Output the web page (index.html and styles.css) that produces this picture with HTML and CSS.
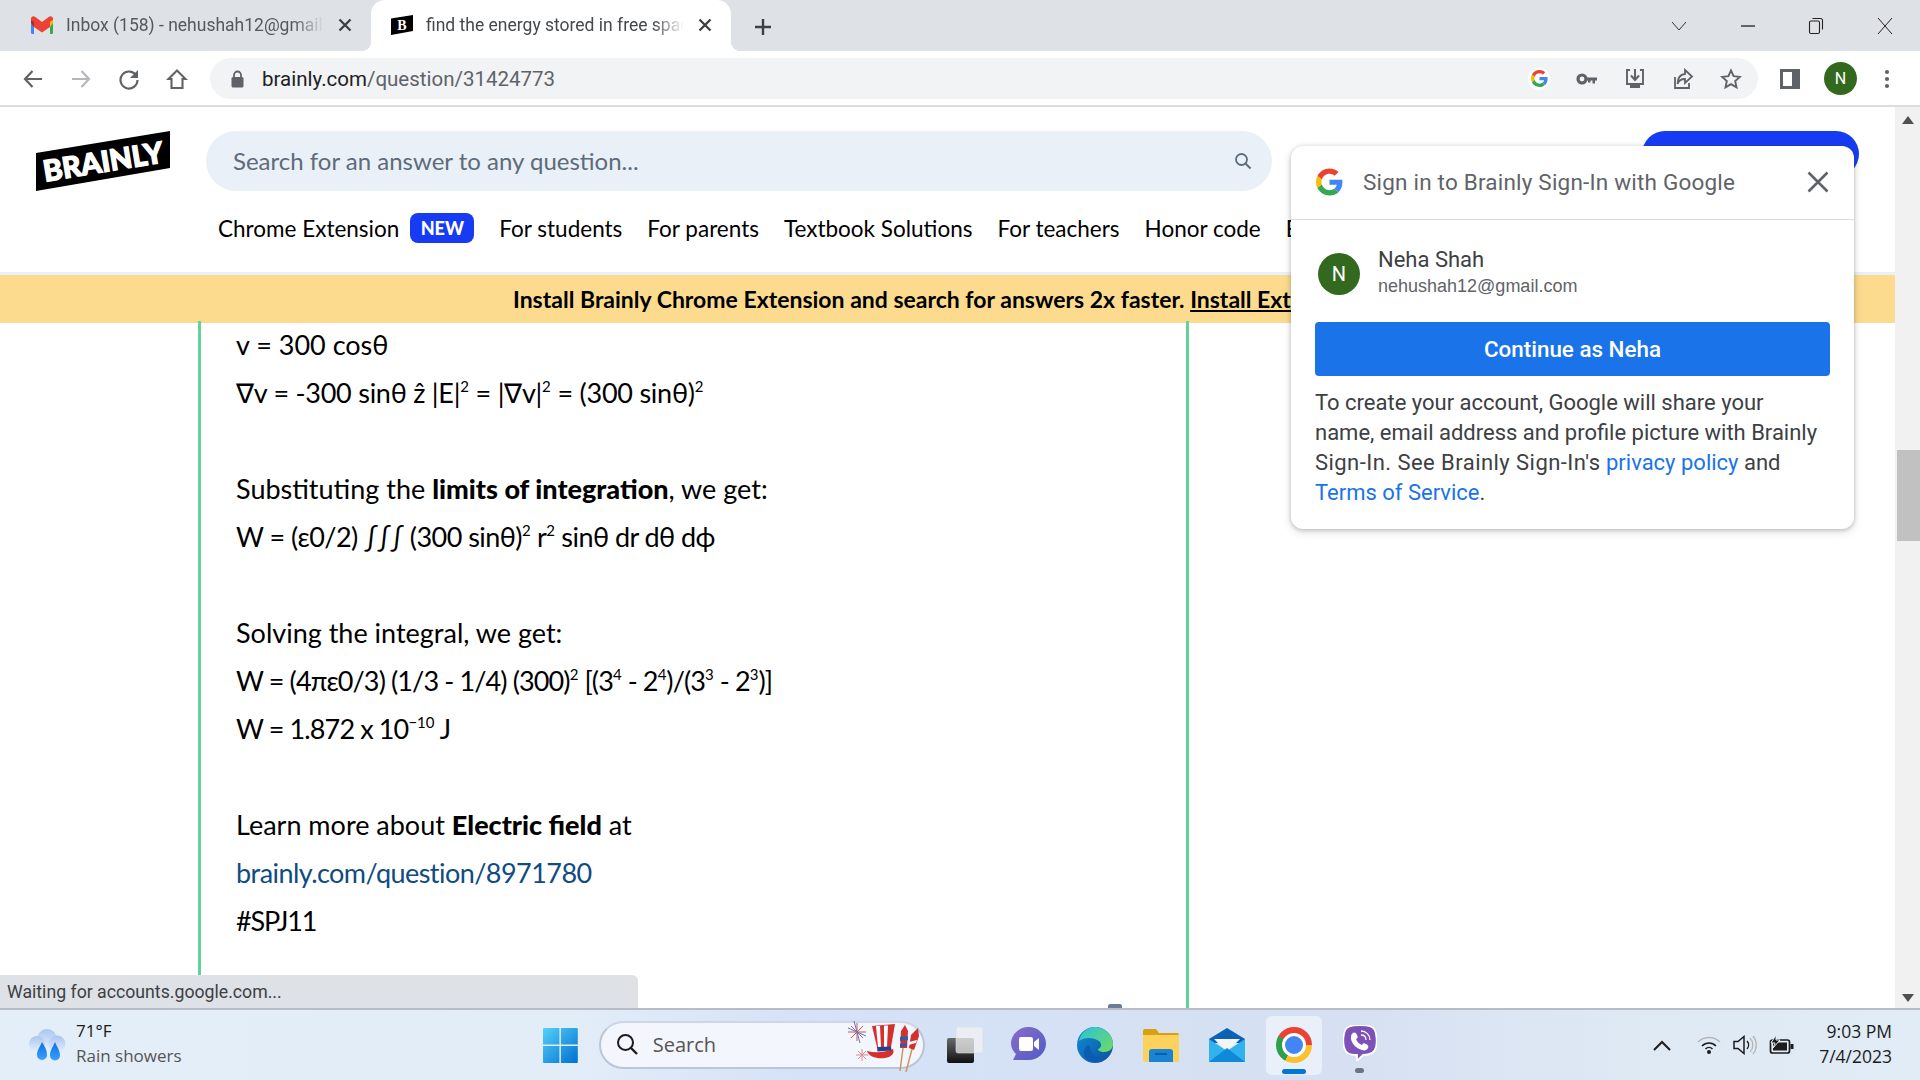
FILE: index.html
```html
<!DOCTYPE html>
<html lang="en">
<head>
<meta charset="utf-8">
<title>find the energy stored in free space</title>
<link rel="stylesheet" href="styles.css">
</head>
<body>
<svg class="defs" width="0" height="0" aria-hidden="true">
  <symbol id="g-logo" viewBox="0 0 48 48">
    <path fill="#EA4335" d="M24 9.5c3.54 0 6.71 1.22 9.21 3.6l6.85-6.85C35.9 2.38 30.47 0 24 0 14.62 0 6.51 5.38 2.56 13.22l7.98 6.19C12.43 13.72 17.74 9.5 24 9.5z"/>
    <path fill="#4285F4" d="M46.98 24.55c0-1.57-.15-3.09-.38-4.55H24v9.02h12.94c-.58 2.96-2.26 5.48-4.78 7.18l7.73 6c4.51-4.18 7.09-10.36 7.09-17.65z"/>
    <path fill="#FBBC05" d="M10.53 28.59c-.48-1.45-.76-2.99-.76-4.59s.27-3.14.76-4.59l-7.98-6.19C.92 16.46 0 20.12 0 24c0 3.88.92 7.54 2.56 10.78l7.97-6.19z"/>
    <path fill="#34A853" d="M24 48c6.48 0 11.93-2.13 15.89-5.81l-7.73-6c-2.15 1.45-4.92 2.3-8.16 2.3-6.26 0-11.57-4.22-13.47-9.91l-7.98 6.19C6.51 42.62 14.62 48 24 48z"/>
  </symbol>
  <symbol id="tab-close" viewBox="0 0 14 14">
    <path d="M1.500 1.500l11 11M12.500 1.500l-11 11" stroke="#3c4043" stroke-width="2.300"/>
  </symbol>
</svg>

<header class="tabstrip">
  <div class="tab">
    <svg class="favicon" width="22" height="18" viewBox="0 0 22 18">
      <path fill="#4285F4" d="M0 16.5V4l3 1v13H1.500A1.500 1.500 0 0 1 0 16.500z"/>
      <path fill="#34A853" d="M19 18V5l3-1v12.500a1.500 1.500 0 0 1-1.500 1.500z"/>
      <path fill="#EA4335" d="M3 11 0 4V2.500C0 .5 2.300-.6 4 .7l7 5.300L18 .7c1.700-1.300 4-.2 4 1.800V4l-3 7-8 5.500z"/>
      <path fill="#C5221F" d="M0 4l3 1.800V11L0 7z"/>
      <path fill="#FBBC05" d="M22 4l-3 1.800V11l3-4z"/>
    </svg>
    <span class="tab-title">Inbox (158) - nehushah12@gmail.com</span>
    <svg class="tab-x" width="14" height="14"><use href="#tab-close"/></svg>
  </div>
  <div class="tab tab-active">
    <svg class="favicon" width="22" height="20" viewBox="0 0 22 20">
      <path fill="#000" d="M0 3.500 22 0v16L0 20z"/>
      <text x="11" y="14.500" text-anchor="middle" class="fav-b">B</text>
    </svg>
    <span class="tab-title">find the energy stored in free space</span>
    <svg class="tab-x" width="14" height="14"><use href="#tab-close"/></svg>
  </div>
  <svg class="newtab" width="20" height="20" viewBox="0 0 20 20"><path d="M10 2v16M2 10h16" stroke="#3c4043" stroke-width="2.400"/></svg>
  <div class="winctl">
    <svg width="16" height="10" viewBox="0 0 16 10"><path d="M1 1l7 8 7-8" fill="none" stroke="#333" stroke-width="1"/></svg>
    <svg width="16" height="10" viewBox="0 0 16 10"><path d="M1 5h14" stroke="#111" stroke-width="1.200"/></svg>
    <svg width="16" height="18" viewBox="0 0 16 18"><rect x="1.500" y="4" width="10" height="12.500" rx="1.500" fill="none" stroke="#222" stroke-width="1.100"/><path d="M4.500 1.500h8a2 2 0 0 1 2 2v9" fill="none" stroke="#222" stroke-width="1.100"/></svg>
    <svg width="16" height="18" viewBox="0 0 16 18"><path d="M1 1l14 16M15 1 1 17" stroke="#222" stroke-width="1"/></svg>
  </div>
</header>

<nav class="toolbar">
  <svg class="tool" width="22" height="22" viewBox="0 0 22 22"><path d="M20 11H3M10.500 3 3 11l7.500 8" fill="none" stroke="#5f6368" stroke-width="2.200"/></svg>
  <svg class="tool" width="22" height="22" viewBox="0 0 22 22"><path d="M2 11h17M11.500 3 19 11l-7.500 8" fill="none" stroke="#b4b7bb" stroke-width="2.200"/></svg>
  <svg class="tool" width="22" height="22" viewBox="0 0 22 22"><path d="M18.500 8A8.500 8.500 0 1 0 19.500 12" fill="none" stroke="#5f6368" stroke-width="2.200"/><path d="M20 2v8h-8z" fill="#5f6368"/></svg>
  <svg class="tool" width="22" height="22" viewBox="0 0 22 22"><path d="M11 2.500 2.500 11H5.500v9h11v-9h3z" fill="none" stroke="#5f6368" stroke-width="2.100"/></svg>
  <div class="omnibox">
    <svg width="13" height="18" viewBox="0 0 13 18"><path d="M3 7V5a3.500 3.500 0 0 1 7 0v2" fill="none" stroke="#5f6368" stroke-width="1.800"/><rect x="0.500" y="7" width="12" height="10.500" rx="1.500" fill="#5f6368"/></svg>
    <span class="url"><span class="url-host">brainly.com</span>/question/31424773</span>
    <div class="omni-icons">
      <span class="g-bubble"><svg width="17" height="17"><use href="#g-logo"/></svg></span>
      <svg width="22" height="12" viewBox="0 0 22 12"><circle cx="6" cy="6" r="4" fill="none" stroke="#5f6368" stroke-width="3.200"/><path d="M9 4.500h12v3h-2v3h-2.500v-3h-2v2H12v-2H9z" fill="#5f6368"/></svg>
      <svg width="22" height="22" viewBox="0 0 22 22"><path d="M6 2H3v14h16V2h-3" fill="none" stroke="#5f6368" stroke-width="1.900"/><path d="M11 1v10M7 7.500l4 4.500 4-4.500" fill="none" stroke="#5f6368" stroke-width="2"/><path d="M6 16h10v4H6z" fill="#5f6368"/></svg>
      <svg width="22" height="22" viewBox="0 0 22 22"><path d="M3 9v11h14v-5" fill="none" stroke="#5f6368" stroke-width="1.800"/><path d="M13 2l7 6.500-7 6.500v-4C9 11 6.500 13 5.500 16c0-6 3-9.500 7.500-10z" fill="none" stroke="#5f6368" stroke-width="1.800"/></svg>
      <svg width="22" height="22" viewBox="0 0 22 22"><path d="M11 2.500l2.600 5.700 6.200.7-4.600 4.200 1.300 6.200L11 16.200l-5.500 3.100 1.300-6.200L2.200 8.900l6.200-.7z" fill="none" stroke="#5f6368" stroke-width="1.900"/></svg>
    </div>
  </div>
  <svg class="sidepanel" width="20" height="20" viewBox="0 0 20 20"><path d="M0 0h20v20H0z" fill="#5f6368"/><path d="M3 3h9v14H3z" fill="#fff"/></svg>
  <span class="chrome-avatar">N</span>
  <svg class="kebab" width="6" height="20" viewBox="0 0 6 20"><circle cx="3" cy="3" r="2.100" fill="#5f6368"/><circle cx="3" cy="10" r="2.100" fill="#5f6368"/><circle cx="3" cy="17" r="2.100" fill="#5f6368"/></svg>
</nav>

<div class="viewport">
  <main class="page">
    <div class="site-header">
      <svg class="logo" width="134" height="60" viewBox="0 0 134 60">
        <path d="M0 22 134 0v37L0 60z" fill="#000"/>
        <text class="logo-text" x="67" y="41" text-anchor="middle" transform="rotate(-9.300 67 30)">BRAINLY</text>
      </svg>
      <div class="search">
        <span>Search for an answer to any question...</span>
        <svg width="18" height="18" viewBox="0 0 18 18"><circle cx="7.500" cy="7.500" r="5.500" fill="none" stroke="#5d6b7a" stroke-width="1.800"/><path d="M11.500 11.500 16.500 16.500" stroke="#5d6b7a" stroke-width="2"/></svg>
      </div>
      <div class="signup-btn"></div>
      <div class="site-nav">
        <span>Chrome Extension</span><span class="badge-new">NEW</span><span>For students</span><span>For parents</span><span>Textbook Solutions</span><span>For teachers</span><span>Honor code</span><span>Expert</span>
      </div>
    </div>
    <div class="banner"><strong>Install Brainly Chrome Extension and search for answers 2x faster. <u>Install Extension</u></strong></div>
    <div class="content">
      <article class="answer">
        <p>v = 300 cosθ</p>
        <p class="tight-s">∇v = -300 sinθ ẑ |E|<sup>2</sup> = |∇v|<sup>2</sup> = (300 sinθ)<sup>2</sup></p>
        <p>&nbsp;</p>
        <p>Substituting the <b>limits of integration</b>, we get:</p>
        <p class="tight-m">W = (ε0/2) ∫∫∫ (300 sinθ)<sup>2</sup> r<sup>2</sup> sinθ dr dθ dϕ</p>
        <p>&nbsp;</p>
        <p>Solving the integral, we get:</p>
        <p class="tight-l">W = (4πε0/3) (1/3 - 1/4) (300)<sup>2</sup> [(3<sup>4</sup> - 2<sup>4</sup>)/(3<sup>3</sup> - 2<sup>3</sup>)]</p>
        <p class="tight-l">W = 1.872 x 10<sup>−10</sup> J</p>
        <p>&nbsp;</p>
        <p>Learn more about <b>Electric field</b> at</p>
        <p class="tight-m"><a class="answer-link">brainly.com/question/8971780</a></p>
        <p class="tight-x">#SPJ11</p>
      </article>
    </div>
    <div class="peek"></div>

    <section class="gsi">
      <div class="gsi-head">
        <svg width="27" height="28"><use href="#g-logo"/></svg>
        <span class="gsi-title">Sign in to Brainly Sign-In with Google</span>
        <svg class="gsi-close" width="22" height="22" viewBox="0 0 22 22"><path d="M1.500 1.500l19 19M20.500 1.500l-19 19" stroke="#5f6368" stroke-width="2.600"/></svg>
      </div>
      <div class="gsi-body">
        <div class="gsi-user">
          <span class="gsi-avatar">N</span>
          <div>
            <div class="gsi-name">Neha Shah</div>
            <div class="gsi-mail">nehushah12@gmail.com</div>
          </div>
        </div>
        <div class="gsi-btn">Continue as Neha</div>
        <p class="gsi-text">To create your account, Google will share your<br>name, email address and profile picture with Brainly<br><span class="gsi-wide">Sign-In. See Brainly Sign-In's</span> <a>privacy policy</a> and<br><a>Terms of Service</a>.</p>
      </div>
    </section>

    <div class="status">Waiting for accounts.google.com...</div>
  </main>
  <aside class="scrollbar">
    <svg width="12" height="8" viewBox="0 0 12 8"><path d="M6 0l6 8H0z" fill="#505050"/></svg>
    <div class="thumb"></div>
    <svg class="down" width="12" height="8" viewBox="0 0 12 8"><path d="M6 8l6-8H0z" fill="#505050"/></svg>
  </aside>
</div>

<footer class="taskbar">
  <div class="weather">
    <svg width="37" height="32" viewBox="0 0 37 32">
      <defs><linearGradient id="cl" x1="0" y1="0" x2="0" y2="1"><stop offset="0" stop-color="#a9c6f0"/><stop offset="1" stop-color="#e6eefc"/></linearGradient>
      <linearGradient id="dr" x1="0" y1="0" x2="0" y2="1"><stop offset="0" stop-color="#0f6fe0"/><stop offset="1" stop-color="#3aa0ff"/></linearGradient></defs>
      <circle cx="18" cy="10" r="10" fill="url(#cl)"/><circle cx="8" cy="15" r="8" fill="url(#cl)"/><circle cx="28" cy="15" r="8.500" fill="url(#cl)"/>
      <path d="M13 13c3 5 5 8 5 13a5 5 0 0 1-10 0c0-5 3-8 5-13z" fill="url(#dr)"/>
      <path d="M26 13c2 5 5 8 5 13.500a5 5 0 0 1-10 0c0-5.500 3-8.500 5-13.500z" fill="url(#dr)"/>
    </svg>
    <div class="weather-text"><div class="temp">71°F</div><div class="cond">Rain showers</div></div>
  </div>
  <div class="apps">
    <svg class="winlogo" width="35" height="35" viewBox="0 0 35 35">
      <defs><linearGradient id="wl" x1="0" y1="0" x2="1" y2="1"><stop offset="0" stop-color="#55d0fa"/><stop offset="1" stop-color="#0070d0"/></linearGradient></defs>
      <path d="M1 0h15.500v16.500H0V1a1 1 0 0 1 1-1zM18 0h16a1 1 0 0 1 1 1v15.500H18zM0 18h16.500v17H1a1 1 0 0 1-1-1zM18 18h17v16a1 1 0 0 1-1 1H18z" fill="url(#wl)"/>
    </svg>
    <div class="tb-search">
      <svg width="22" height="22" viewBox="0 0 22 22"><circle cx="9.500" cy="9.500" r="7.500" fill="none" stroke="#1c1c1c" stroke-width="2"/><path d="M15 15l6 6" stroke="#1c1c1c" stroke-width="2.400"/></svg>
      <span>Search</span>
      <svg class="hat" width="72" height="54" viewBox="0 0 72 54">
        <g stroke="#d9534f" stroke-width="1"><path d="M10 4v18M1 13h18M4 7l12 12M16 7 4 19"/></g>
        <g stroke="#4a7fd0" stroke-width="1"><path d="M7 2l6 22M1 9l18 8"/></g>
        <g stroke="#d98f8f" stroke-width="1"><path d="M15 30v12M9 36h12M11 32l8 8M19 32l-8 8"/></g>
        <path d="M25 7 48 5l-4 23H30z" fill="#d5302e"/>
        <path d="M29 7h4l1 21h-3zM37 6.500h4l-1 21.500h-3z" fill="#fff"/>
        <path d="M20 32c8 2 16 2 26-2 2 5-2 8-8 9-8 1-16-1-18-7z" fill="#d5302e"/>
        <path d="M30 28l14-.500.500 4-14 1z" fill="#24408e"/>
        <path d="M54 12l4-6 3 6-1 17h-7z" fill="#d5302e"/><path d="M53 18l8-1v4l-8 1zM53 25l7-1v3l-7 1z" fill="#2a5fb0"/>
        <path d="M56 29l-3 23M65 30l-6 23" stroke="#c89a5a" stroke-width="1.500"/>
        <path d="M64 16l7-7 1 8-5 14-5-2z" fill="#d5302e"/><path d="M62 23l8-2-1 3-8 2z" fill="#fff"/>
      </svg>
    </div>
    <div class="slot">
      <svg width="37" height="36" viewBox="0 0 37 36">
        <defs><linearGradient id="tv" x1="0" y1="0" x2="0" y2="1"><stop offset="0" stop-color="#6a6a6a"/><stop offset="1" stop-color="#101010"/></linearGradient></defs>
        <rect x="0" y="11" width="27" height="25" rx="2" fill="url(#tv)"/>
        <rect x="9" y="0" width="27" height="26" rx="2" fill="#f3f3f3" fill-opacity=".72" stroke="#dcdcdc" stroke-width=".6"/>
      </svg>
    </div>
    <div class="slot">
      <svg width="35" height="36" viewBox="0 0 35 36">
        <defs><linearGradient id="mt" x1="0" y1="0" x2="1" y2="1"><stop offset="0" stop-color="#8a6cc8"/><stop offset="1" stop-color="#4f5cc8"/></linearGradient></defs>
        <path d="M17.500 0C27 0 35 7.500 35 16.500S27 33 17.500 33H2L5 27C2 24 0 20.500 0 16.500 0 7.500 8 0 17.500 0z" fill="url(#mt)"/>
        <rect x="8" y="10" width="14" height="14" rx="2" fill="#fff"/><path d="M23 15l5-4v12l-5-4z" fill="#fff"/>
      </svg>
    </div>
    <div class="slot">
      <svg width="36" height="36" viewBox="0 0 36 36">
        <defs><linearGradient id="e1" x1="0" y1="0" x2="1" y2="1"><stop offset="0" stop-color="#2cc1d8"/><stop offset="1" stop-color="#6fdc60"/></linearGradient>
        <linearGradient id="e2" x1="0" y1="0" x2="1" y2="1"><stop offset="0" stop-color="#0f8ed8"/><stop offset="1" stop-color="#0c4f9e"/></linearGradient></defs>
        <circle cx="18" cy="18" r="18" fill="url(#e2)"/>
        <path d="M2 14C4 5 11 0 18 0c10 0 18 8 18 17 0 5-4 8-9 8-3 0-6-1-6-3 4-1 4-6 1-8-6-4-15-4-20 0z" fill="url(#e1)"/>
        <path d="M13 20c0 6 6 11 13 10-4 4-9 6-13 4C7 32 5 25 9 20c1-2 4-2 4 0z" fill="#0a5db0"/>
      </svg>
    </div>
    <div class="slot">
      <svg width="36" height="33" viewBox="0 0 36 33">
        <path d="M0 2a2 2 0 0 1 2-2h11l3 4h18a2 2 0 0 1 2 2v6H0z" fill="#d9a013"/>
        <path d="M0 6h36v25a2 2 0 0 1-2 2H2a2 2 0 0 1-2-2z" fill="#fcd25a"/>
        <path d="M6 33V23a3 3 0 0 1 3-3h18a3 3 0 0 1 3 3v10z" fill="#1a84d4"/>
        <path d="M12 25h12" stroke="#0c5da8" stroke-width="2"/>
      </svg>
    </div>
    <div class="slot">
      <svg width="36" height="34" viewBox="0 0 36 34">
        <path d="M0 11 18 0l18 11v4H0z" fill="#0a62b5"/>
        <path d="M5 11h26l-13 13z" fill="#f3f5f7"/>
        <path d="M0 11l18 12 18-12v23H0z" fill="#2fb2ee"/>
        <path d="M0 34l18-14 18 14z" fill="#0f8ad8"/>
      </svg>
    </div>
    <div class="slot slot-active">
      <span class="chrome-icon"><span></span></span>
      <i class="active-bar"></i>
    </div>
    <div class="slot slot-viber">
      <svg width="34" height="36" viewBox="0 0 34 36">
        <path d="M17 0c8 0 15 1 16 9 1 5 1 9 0 13-1 6-7 8-13 8l-6 6v-6C6 30 2 28 1 22 0 17 0 13 1 9 2 1 9 0 17 0z" fill="#7d51b8" stroke="#fff" stroke-width="1.800"/>
        <path d="M10 8c2-1 3 0 4 2s1 3-1 4c1 3 3 5 6 6 1-2 2-2 4-1s3 2 2 4-3 3-6 2C13 23 9 19 8 14c0-3 0-5 2-6z" fill="#fff"/>
        <path d="M18 6c5 0 9 4 9 9M18 10c3 0 5 2 5 5" fill="none" stroke="#fff" stroke-width="1.300"/>
      </svg>
      <i class="run-dot"></i>
    </div>
  </div>
  <div class="tray">
    <svg class="tray-chev" width="18" height="11" viewBox="0 0 18 11"><path d="M1 10l8-8 8 8" fill="none" stroke="#1c1c1c" stroke-width="2"/></svg>
    <svg class="tray-wifi" width="24" height="18" viewBox="0 0 24 18"><path d="M1 6c6-6 16-6 22 0" fill="none" stroke="#b5b5b5" stroke-width="1.500"/><path d="M5 10c4-4 10-4 14 0M8.500 13c2-2 5-2 7 0" fill="none" stroke="#1c1c1c" stroke-width="1.600"/><circle cx="12" cy="16" r="2" fill="#1c1c1c"/></svg>
    <svg class="tray-vol" width="24" height="20" viewBox="0 0 24 20"><path d="M1 6.500h4L11 1.500v17L5 13.500H1z" fill="none" stroke="#1c1c1c" stroke-width="1.500"/><path d="M14 6a6 6 0 0 1 0 8" fill="none" stroke="#1c1c1c" stroke-width="1.400"/><path d="M17 3a10 10 0 0 1 0 14M20 1a14 14 0 0 1 0 18" fill="none" stroke="#b5b5b5" stroke-width="1.300"/></svg>
    <svg class="tray-bat" width="25" height="20" viewBox="0 0 25 20"><rect x="1.500" y="5" width="19" height="13" rx="2" fill="none" stroke="#1c1c1c" stroke-width="1.700"/><rect x="4" y="7.500" width="14" height="8" fill="#1c1c1c"/><path d="M21.500 9h3v5h-3z" fill="#1c1c1c"/><path d="M7 0 2 8h4l-2 5 7-8H7z" fill="#1c1c1c" stroke="#e2ecf6" stroke-width="1"/></svg>
    <div class="clock"><div>9:03 PM</div><div>7/4/2023</div></div>
  </div>
</footer>
</body>
</html>
```
FILE: styles.css
```css
* { box-sizing: border-box; }
html, body { margin: 0; height: 100%; }
body {
  width: 1920px; height: 1080px; overflow: hidden;
  display: flex; flex-direction: column;
  font-family: "Lato", "Open Sans", sans-serif; color: #000; background: #fff;
}
.defs { position: absolute; }

/* tab strip */
.tabstrip { height: 51px; background: #dee1e6; display: flex; align-items: flex-end; flex: none; }
.tab { width: 360px; height: 51px; display: flex; align-items: center; padding: 0 18px 2px 20px; gap: 13px; font: 17.500px "Roboto", sans-serif; color: #55585c; border-radius: 14px 14px 0 0; }
.tab:first-child { width: 360px; margin-left: 11px; }
.tab-active { background: #fff; position: relative; color: #45484c; }
.tab-active::before, .tab-active::after { content: ""; position: absolute; bottom: 0; width: 10px; height: 10px; background: radial-gradient(circle at 0 0, transparent 10px, #fff 10.500px); }
.tab-active::before { left: -10px; }
.tab-active::after { right: -10px; background: radial-gradient(circle at 100% 0, transparent 10px, #fff 10.500px); }
.favicon { flex: none; }
.fav-b { font: 900 14px "Liberation Serif", serif; fill: #fff; }
.tab-title { flex: 1; min-width: 0; white-space: nowrap; overflow: hidden; -webkit-mask-image: linear-gradient(90deg, #000 88%, transparent); mask-image: linear-gradient(90deg, #000 88%, transparent); }
.tab-x { flex: none; margin: 0 1px; }
.newtab { margin: 0 0 14px 22px; }
.winctl { margin-left: auto; margin-bottom: 16px; margin-right: 27px; display: flex; gap: 52px; align-items: center; width: 222px; justify-content: space-between; }

/* toolbar */
.toolbar { height: 56px; flex: none; background: #fff; border-bottom: 2px solid #dadce0; display: flex; align-items: center; padding: 1px 22px 0 22px; }
.tool { margin-right: 26px; flex: none; }
.toolbar .tool:nth-child(4) { margin-right: 22px; }
.omnibox { width: 1548px; height: 41px; background: #f1f3f4; border-radius: 21px; display: flex; align-items: center; padding: 0 16px 0 21px; gap: 18px; }
.url { font: 20.500px "Roboto", sans-serif; color: #5f6368; }
.url-host { color: #202124; }
.omni-icons { margin-left: auto; display: flex; align-items: center; gap: 26px; }
.g-bubble { width: 22px; height: 22px; background: #fff; border-radius: 50%; display: flex; align-items: center; justify-content: center; }
.sidepanel { margin-left: 22px; flex: none; }
.chrome-avatar { margin-left: 24px; width: 33px; height: 33px; border-radius: 50%; background: #33691e; color: #fff; font: 16px "Roboto", sans-serif; display: flex; align-items: center; justify-content: center; flex: none; }
.kebab { margin-left: 27px; flex: none; }

/* page */
.viewport { flex: 1; min-height: 0; display: flex; }
.page { flex: 1; min-width: 0; position: relative; overflow: hidden; }
.site-header { height: 165px; display: grid; grid-template-columns: 134px 1066px 217px; grid-template-rows: 60px auto; column-gap: 36px; padding: 24px 0 0 36px; }
.logo-text { font: 900 29px "Lato", sans-serif; fill: #fff; stroke: #fff; stroke-width: 1.300px; }
.search { height: 60px; background: #e9f0f7; border-radius: 30px; display: flex; align-items: center; justify-content: space-between; padding: 0 20px 1px 27px; font-size: 24px; color: #5d6b7a; }
.signup-btn { height: 46px; background: #163bf3; border-radius: 24px; margin-left: 334px; width: 217px; }
.site-nav { grid-column: 2 / 4; margin-left: 12px; padding-top: 22px; display: flex; align-items: center; gap: 25px; font-size: 22.500px; white-space: nowrap; height: 30px; box-sizing: content-box; }
.badge-new { margin-left: -14px; width: 64px; height: 30px; border-radius: 8px; background: #163bf3; color: #fff; font-weight: 900; font-size: 18px; display: flex; align-items: center; justify-content: center; }
.banner { height: 51px; border-top: 3px solid #e9f0f7; background: #fddb8e; padding: 0 0 1px 513px; display: flex; align-items: center; font-size: 23px; white-space: nowrap; overflow: hidden; }
.content { height: 701px; padding-left: 198px; }
.answer { width: 991px; height: 701px; border-left: 3px solid #60d399; border-right: 3px solid #60d399; padding: 0 0 0 35px; font-size: 27px; line-height: 48px; }
.answer p { margin: 0; height: 48px; white-space: nowrap; }
.answer p:first-child { margin-top: -2px; }
.tight-s { letter-spacing: -.25px; }
.tight-m { letter-spacing: -.55px; }
.tight-l { letter-spacing: -.88px; }
.tight-x { letter-spacing: -1.100px; }
.answer sup { font-size: 15px; line-height: 0; vertical-align: 11px; letter-spacing: 0; }
.answer b { font-weight: 900; }
.answer-link { color: #0f4c81; }
.peek { position: absolute; left: 1108px; bottom: 0; width: 14px; height: 4px; background: #6a7f96; border-radius: 2px 2px 0 0; }

/* google popup */
.gsi { position: absolute; left: 1291px; top: 39px; width: 563px; height: 383px; background: #fff; border-radius: 12px; box-shadow: 0 1px 4px rgba(60,64,67,.3), 0 3px 10px rgba(60,64,67,.15); font-family: "Roboto", sans-serif; }
.gsi-head { height: 74px; border-bottom: 1px solid #dadce0; display: flex; align-items: center; padding: 0 25px 2px 25px; }
.gsi-title { margin-left: 20px; font-size: 22.500px; letter-spacing: .2px; color: #5f6368; flex: 1; }
.gsi-body { padding: 28px 24px 0; }
.gsi-user { display: flex; align-items: center; gap: 18px; padding-left: 3px; height: 48px; }
.gsi-avatar { width: 42px; height: 42px; border-radius: 50%; background: #33691e; color: #fff; font-size: 20px; display: flex; align-items: center; justify-content: center; margin-top: 4px; }
.gsi-name { font-size: 22px; color: #3c4043; line-height: 28px; }
.gsi-mail { font: 18px "Liberation Sans", sans-serif; color: #5f6368; line-height: 24px; }
.gsi-btn { margin-top: 26px; height: 54px; border-radius: 4px; background: #1a73e8; color: #fff; font-size: 22.400px; font-weight: 500; display: flex; align-items: center; justify-content: center; }
.gsi-text { margin: 12px 0 0; font-size: 22px; line-height: 30px; color: #3c4043; white-space: nowrap; }
.gsi-wide { letter-spacing: .45px; }
.gsi-text a { color: #1a73e8; }

.status { position: absolute; left: 0; bottom: 0; width: 638px; height: 33px; background: #dee1e6; border-radius: 0 6px 0 0; padding: 1px 7px 0; display: flex; align-items: center; font: 17.700px "Roboto", sans-serif; color: #3c4043; }

/* scrollbar */
.scrollbar { width: 25px; flex: none; background: #f1f1f1; display: flex; flex-direction: column; align-items: center; padding-top: 9px; }
.thumb { width: 23px; margin: 326px 0 0 2px; height: 91px; background: #c1c1c1; }
.down { margin-top: auto; margin-bottom: 6px; }

/* taskbar */
.taskbar { height: 72px; flex: none; border-top: 2px solid #b7bcc7; background: linear-gradient(90deg, #e3eef8 0%, #e2edf8 30%, #d5e2f7 42%, #d6e0f2 70%, #dfe9f4 85%, #e2ecf6 100%); display: flex; align-items: center; }
.weather { width: 543px; flex: none; display: flex; align-items: center; gap: 10px; padding-left: 29px; font: 17px "Open Sans", sans-serif; }
.weather-text { margin-top: -5px; }
.temp { color: #1a1a1a; line-height: 25px; }
.cond { color: #555; line-height: 25px; }
.apps { display: flex; align-items: center; width: 850px; flex: none; height: 100%; }
.tb-search { margin-left: 21px; width: 328px; height: 48px; border-radius: 24px; background: #f3f6fd; border: 2px solid #bcc5d8; border-top-color: #cdd5e6; display: flex; align-items: center; padding: 0 0 2px 15px; gap: 15px; font: 20px "Open Sans", sans-serif; color: #555; position: relative; }
.hat { position: absolute; right: 4px; top: -4px; }
.slot { width: 66.700px; height: 100%; display: flex; align-items: center; justify-content: center; position: relative; }
.tb-search + .slot { margin-left: 11px; width: 60px; }
.slot-active::before { content: ""; position: absolute; left: 5px; right: 5px; top: 6px; bottom: 5px; background: #eaf0fa; border-radius: 6px; }
.chrome-icon { position: relative; width: 36px; height: 36px; border-radius: 50%; background: conic-gradient(#ea4335 0 90deg, #fbc02d 90deg 210deg, #2e9e4f 210deg 300deg, #ea4335 300deg); display: flex; align-items: center; justify-content: center; }
.chrome-icon span { width: 18px; height: 18px; border-radius: 50%; background: #4285f4; border: 3px solid #fff; box-sizing: content-box; margin: -3px; }
.active-bar { position: absolute; left: 21px; width: 24px; height: 5px; bottom: 6px; border-radius: 3px; background: #0078d4; }
.run-dot { position: absolute; left: 28px; bottom: 7px; width: 9px; height: 5px; border-radius: 3px; background: #6e7480; }
.slot-viber svg { margin-bottom: 4px; }
.tray { flex: 1; display: flex; align-items: center; position: relative; padding-left: 260px; }
.tray-wifi { margin-left: 26px; }
.tray-vol { margin-left: 12px; }
.tray-bat { margin-left: 12px; }
.clock { margin-left: auto; padding-right: 28px; text-align: right; font: 17.500px "Open Sans", sans-serif; color: #1c1c1c; line-height: 25px; margin-top: -2px; }
```
